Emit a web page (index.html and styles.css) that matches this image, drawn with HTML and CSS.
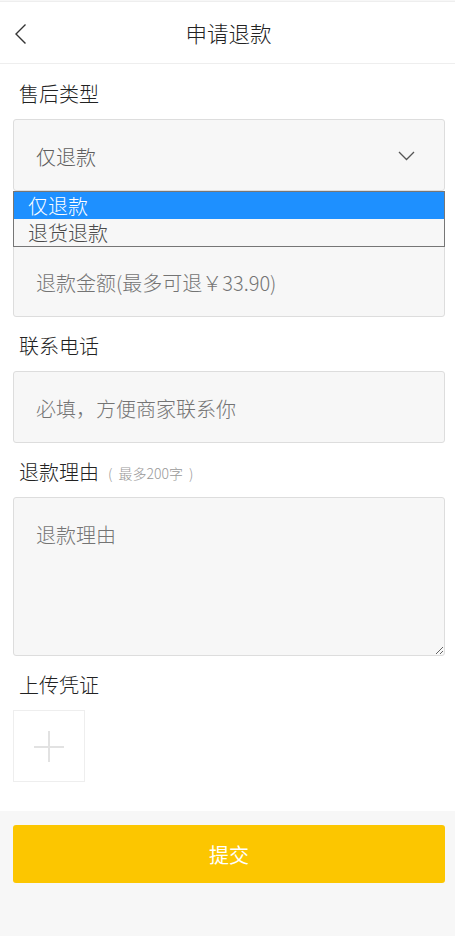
FILE: index.html
```html
<!DOCTYPE html>
<html lang="zh-CN">
<head>
<meta charset="utf-8">
<title>申请退款</title>
<link rel="stylesheet" href="styles.css">
</head>
<body>
<div class="page">
  <header class="topbar">
    <span class="back">
      <svg width="14" height="22" viewBox="0 0 14 22"><path d="M11.5 1.5 L2 11 L11.5 20.5" fill="none" stroke="#333" stroke-width="1.4"/></svg>
    </span>
    <h1 class="title">申请退款</h1>
  </header>
  <main class="form">
    <div class="label">售后类型</div>
    <div class="select-wrap">
      <div class="field select">
        <span>仅退款</span>
        <svg class="caret" width="17" height="10" viewBox="0 0 17 10"><path d="M1 1 L8.5 8.5 L16 1" fill="none" stroke="#555" stroke-width="1.3"/></svg>
      </div>
      <ul class="options">
        <li class="option active">仅退款</li>
        <li class="option">退货退款</li>
      </ul>
    </div>
    <div class="label spacer"></div>
    <input class="field input" type="text" placeholder="退款金额(最多可退￥33.90)">
    <div class="label">联系电话</div>
    <input class="field input" type="text" placeholder="必填，方便商家联系你">
    <div class="label">退款理由<span class="hint">(<span class="hint-in">最多200字</span>)</span></div>
    <textarea class="field area" placeholder="退款理由"></textarea>
    <div class="label">上传凭证</div>
    <div class="upload">
      <span class="plus-h"></span>
      <span class="plus-v"></span>
    </div>
  </main>
  <footer class="bottom">
    <button class="submit" type="button">提交</button>
  </footer>
</div>
</body>
</html>
```

FILE: styles.css
```css
* { box-sizing: border-box; }
html, body {
  margin: 0;
  padding: 0;
  background: #f7f7f7;
  font-family: "Noto Sans CJK SC", "Noto Sans", sans-serif;
  font-weight: 300;
  color: #333;
}
.page {
  min-height: 936px;
  background: #f7f7f7;
}
.topbar {
  margin-top: 1px;
  height: 63px;
  border-top: 1px solid #eeeeee;
  border-bottom: 1px solid #eeeeee;
  background: #fff;
  display: flex;
  align-items: center;
  justify-content: center;
  position: relative;
}
.back {
  position: absolute;
  left: 14px;
  top: 21px;
  display: block;
  width: 14px;
  height: 22px;
}
.back svg { display: block; }
.title {
  margin: 0 0 0 2px;
  font-size: 21.5px;
  font-weight: 300;
  color: #222;
  line-height: 1;
}
.form {
  background: #fff;
  padding: 0 10px 29px 13px;
}
.label {
  height: 54px;
  padding-left: 6px;
  padding-top: 3px;
  display: flex;
  align-items: center;
  font-size: 20px;
  color: #222;
}
.label:first-child { height: 55px; }
.hint {
  font-size: 14px;
  color: #999;
  margin-left: 9px;
  padding-top: 2px;
}
.hint-in { margin: 0 6px; }
.field {
  display: block;
  width: 432px;
  background: #f7f7f7;
  border: 1px solid #dddddd;
  border-radius: 3px;
  font-family: "Noto Sans CJK SC", "Noto Sans", sans-serif;
  font-weight: 300;
  font-size: 20px;
  outline: none;
  margin: 0;
}
.select-wrap { position: relative; }
.select {
  height: 72px;
  padding: 2px 29px 0 22px;
  display: flex;
  align-items: center;
  justify-content: space-between;
  color: #5e5e5e;
}
.caret { display: block; margin-top: 0; }
.options {
  position: absolute;
  left: 0;
  top: 72px;
  width: 432px;
  margin: 0;
  padding: 0;
  list-style: none;
  background: #f7f7f7;
  border: 1px solid #767676;
  z-index: 2;
}
.option {
  height: 27px;
  line-height: 27px;
  padding-left: 14px;
  font-size: 20px;
  color: #4a4a4a;
}
.option.active {
  background: #1e90ff;
  color: #fff;
}
.input {
  height: 72px;
  padding: 2px 22px 0;
  color: #333;
}
.area {
  height: 159px;
  padding: 22px 22px;
  line-height: 30px;
  resize: vertical;
  color: #333;
}
.field::placeholder { color: #747474; }
.upload {
  width: 72px;
  height: 72px;
  border: 1px solid #eeeeee;
  position: relative;
}
.plus-h {
  position: absolute;
  left: 20px;
  top: 35px;
  width: 30px;
  height: 2px;
  background: #e2e2e2;
}
.plus-v {
  position: absolute;
  left: 34px;
  top: 20px;
  width: 2px;
  height: 31px;
  background: #e2e2e2;
}
.bottom {
  padding: 14px 10px 0 13px;
}
.submit {
  display: block;
  width: 432px;
  height: 58px;
  border: none;
  border-radius: 3px;
  background: #fcc600;
  color: #fff;
  font-family: "Noto Sans CJK SC", "Noto Sans", sans-serif;
  font-weight: 400;
  font-size: 20px;
  padding: 0;
}
```
